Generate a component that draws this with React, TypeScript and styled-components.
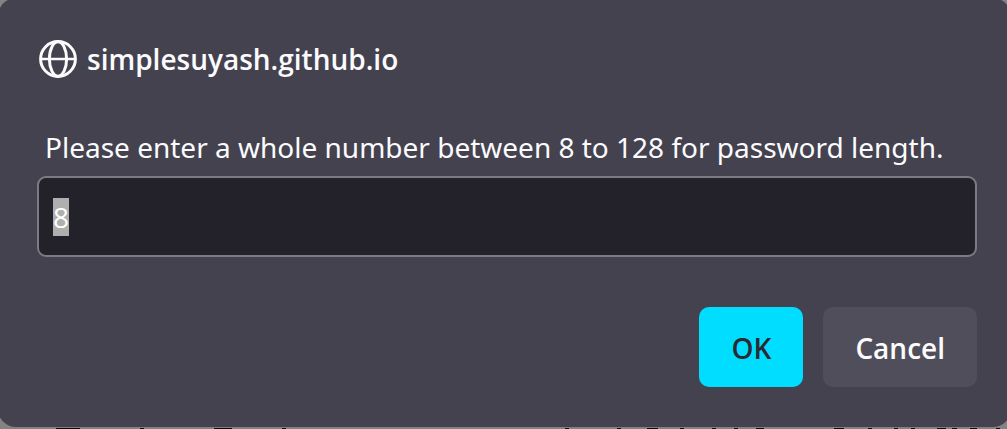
import React, { useEffect, useRef } from 'react';
import styled, { createGlobalStyle } from 'styled-components';

const GlobalStyle = createGlobalStyle`
  * { box-sizing: border-box; }
  html, body { margin: 0; overflow: hidden; background: #858283; }
  body, input, button { font-family: "Open Sans", "Noto Sans", sans-serif; }
`;

const Page = styled.main`
  overflow: hidden;
`;

const Dialog = styled.form`
  margin: -2px -4px 0 -2px;
  padding: 39px 34px 40px 39px;
  border-radius: 18px;
  background: #44424e;
  color: #fbfbfe;
`;

const Origin = styled.header`
  display: flex;
  align-items: center;
  gap: 10px;
  height: 44px;
  padding-left: 2px;
`;

const OriginName = styled.h1`
  margin: 0;
  font-size: 28px;
  font-weight: 600;
  line-height: 44px;
`;

const Message = styled.label`
  display: block;
  margin-top: 46px;
  padding: 0 8px 9px;
  font-family: "Noto Sans", "Open Sans", sans-serif;
  font-size: 28px;
  line-height: 40px;
  white-space: nowrap;
`;

const Answer = styled.input`
  display: block;
  width: 100%;
  height: 81px;
  padding: 0 14px;
  border: 2px solid #7c7a83;
  border-radius: 9px;
  outline: none;
  background: #23222b;
  color: #ffffff;
  font-size: 28px;
  line-height: 40px;

  &::selection {
    background: rgba(177, 177, 177, 0.99);
    color: #ffffff;
  }
`;

const Actions = styled.footer`
  display: flex;
  justify-content: flex-end;
  gap: 20px;
  margin-top: 50px;
`;

const ActionButton = styled.button<{ $primary?: boolean }>`
  height: 80px;
  padding: 2px 32px 0;
  border: 0;
  border-radius: 10px;
  background: ${(p) => (p.$primary ? '#00ddff' : '#504e5a')};
  color: ${(p) => (p.$primary ? '#2b2a33' : '#fbfbfe')};
  font-size: 28px;
  font-weight: 600;
  line-height: 40px;
`;

const Backdrop = styled.svg`
  display: block;
  margin-top: 1px;
`;

const Globe = () => (
  <svg width="38" height="38" viewBox="0 0 38 38" fill="none" stroke="#fbfbfe" strokeWidth="3" aria-hidden="true">
    <circle cx="19" cy="19" r="17.4" />
    <ellipse cx="19" cy="19" rx="8.6" ry="17.2" />
    <path d="M1.5 19H36.5" strokeWidth="2.6" />
  </svg>
);

const edges: [number, number][] = [
  [56, 24], [140, 4], [214, 18], [282, 4], [565, 4], [617, 4], [647, 11],
  [680, 4], [712, 4], [734, 4], [756, 8], [834, 10], [868, 4], [894, 4],
  [911, 4], [937, 9], [952, 5], [970, 7], [996, 4],
];

export default function App() {
  const answer = useRef<HTMLInputElement>(null);

  useEffect(() => {
    answer.current?.focus();
    answer.current?.select();
  }, []);

  return (
    <Page>
      <GlobalStyle />
      <Dialog onSubmit={(e) => e.preventDefault()}>
        <Origin>
          <Globe />
          <OriginName>simplesuyash.github.io</OriginName>
        </Origin>
        <Message htmlFor="answer">
          Please enter a whole number between 8 to 128 for password length.
        </Message>
        <Answer id="answer" ref={answer} type="text" defaultValue="8" />
        <Actions>
          <ActionButton $primary type="submit">OK</ActionButton>
          <ActionButton type="button">Cancel</ActionButton>
        </Actions>
      </Dialog>
      <Backdrop width="1007" height="1" aria-hidden="true">
        {edges.map(([x, width]) => (
          <rect key={x} x={x} width={width} height="1" fill="#08070a" />
        ))}
      </Backdrop>
    </Page>
  );
}
